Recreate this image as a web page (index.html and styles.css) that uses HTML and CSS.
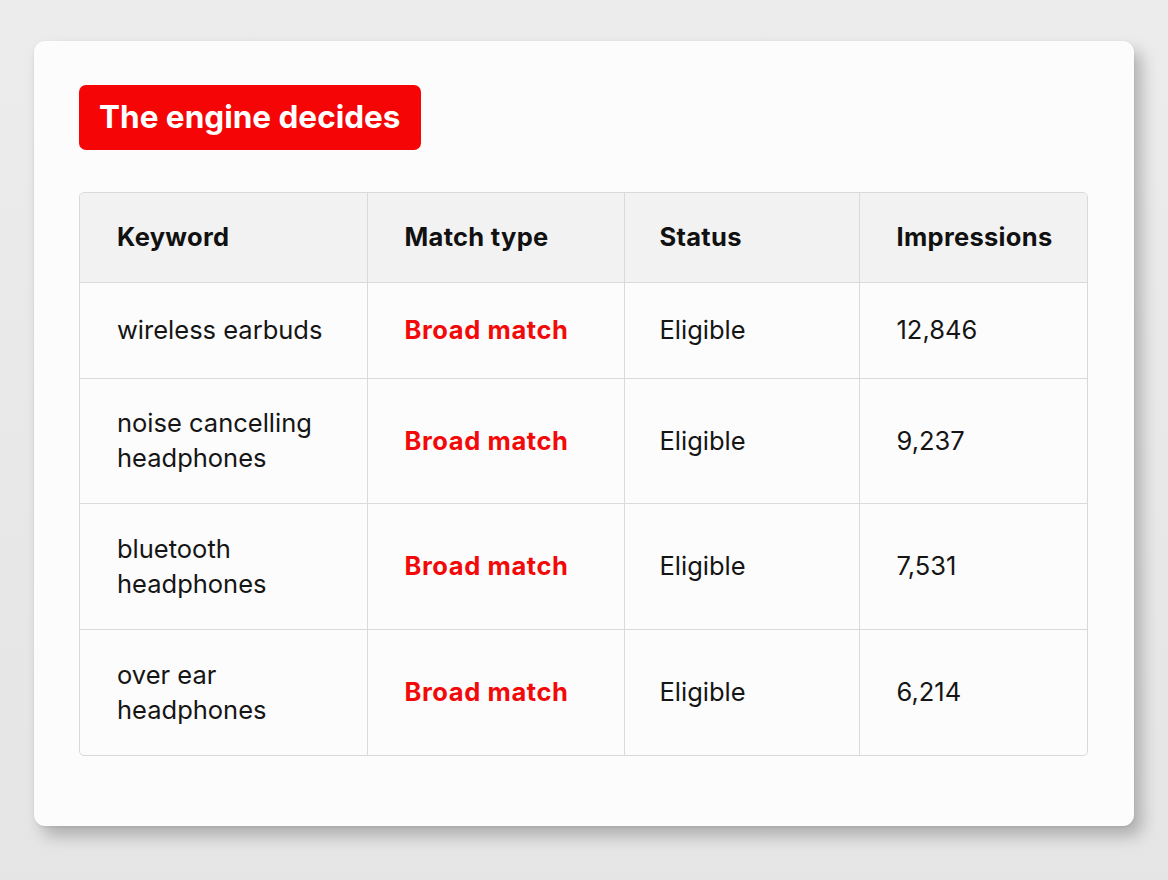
FILE: index.html
```html
<!DOCTYPE html>
<html lang="en">
<head>
<meta charset="utf-8">
<title>The engine decides</title>
<link rel="stylesheet" href="styles.css">
</head>
<body>
<main class="card">
  <h1 class="badge">The engine decides</h1>
  <div class="table-wrap">
    <table class="kw-table">
      <colgroup>
        <col class="c1"><col class="c2"><col class="c3"><col class="c4">
      </colgroup>
      <thead>
        <tr class="head-row">
          <th>Keyword</th><th>Match type</th><th class="status">Status</th><th>Impressions</th>
        </tr>
      </thead>
      <tbody>
        <tr class="row-short">
          <td>wireless earbuds</td><td class="match">Broad match</td><td class="status">Eligible</td><td>12,846</td>
        </tr>
        <tr class="row-tall">
          <td>noise cancelling<br>headphones</td><td class="match">Broad match</td><td class="status">Eligible</td><td>9,237</td>
        </tr>
        <tr class="row-tall">
          <td>bluetooth<br>headphones</td><td class="match">Broad match</td><td class="status">Eligible</td><td>7,531</td>
        </tr>
        <tr class="row-tall">
          <td>over ear<br>headphones</td><td class="match">Broad match</td><td class="status">Eligible</td><td>6,214</td>
        </tr>
      </tbody>
    </table>
  </div>
</main>
</body>
</html>
```
FILE: styles.css
```css
* { box-sizing: border-box; }
html, body { margin: 0; padding: 0; }
body {
  width: 1168px;
  height: 880px;
  overflow: hidden;
  background: linear-gradient(180deg, #ececec 0%, #e5e5e5 100%);
  font-family: Inter, "Liberation Sans", sans-serif;
  color: #111;
  padding: 41px 34px 0 34px;
}
.card {
  width: 1100px;
  height: 785px;
  background: #fcfcfc;
  border-radius: 11px;
  box-shadow: 8px 10px 16px rgba(0,0,0,0.24), 0 1px 3px rgba(0,0,0,0.08);
  padding: 44px 45px 0 45px;
}
.badge {
  display: inline-block;
  margin: 0;
  height: 65px;
  line-height: 64px;
  padding: 0 21px 0 20px;
  background: #f50505;
  color: #fff;
  border-radius: 7px;
  font-size: 31.5px;
  font-weight: 700;
  letter-spacing: 0;
}
.table-wrap {
  margin-top: 42px;
  width: 1009px;
  border: 1px solid #d9d9d9;
  border-radius: 5px;
  overflow: hidden;
}
.kw-table {
  width: 1007px;
  border-collapse: collapse;
  table-layout: fixed;
  font-size: 25.5px;
}
.c1 { width: 287px; }
.c2 { width: 257px; }
.c3 { width: 235px; }
.c4 { width: 228px; }
.kw-table th, .kw-table td {
  text-align: left;
  vertical-align: middle;
  padding: 0 12px 0 37px;
  border-right: 1px solid #dadada;
  border-bottom: 1px solid #dadada;
  line-height: 35px;
}
.kw-table th.status, .kw-table td.status { padding-left: 35px; }
.kw-table th:last-child, .kw-table td:last-child { border-right: none; }
.kw-table tbody tr:last-child td { border-bottom: none; }
.head-row { height: 89px; background: #f2f2f2; }
.kw-table th { font-weight: 700; color: #111; letter-spacing: 0.3px; padding-bottom: 2px; }
.kw-table td { font-weight: 400; color: #151515; letter-spacing: 0; padding-bottom: 1px; }
.row-short { height: 96px; }
.row-tall { height: 126px; }
.kw-table tbody tr:nth-child(2) { height: 125px; }
.kw-table td.match { color: #f20a0a; font-weight: 700; letter-spacing: 0.6px; }
```
